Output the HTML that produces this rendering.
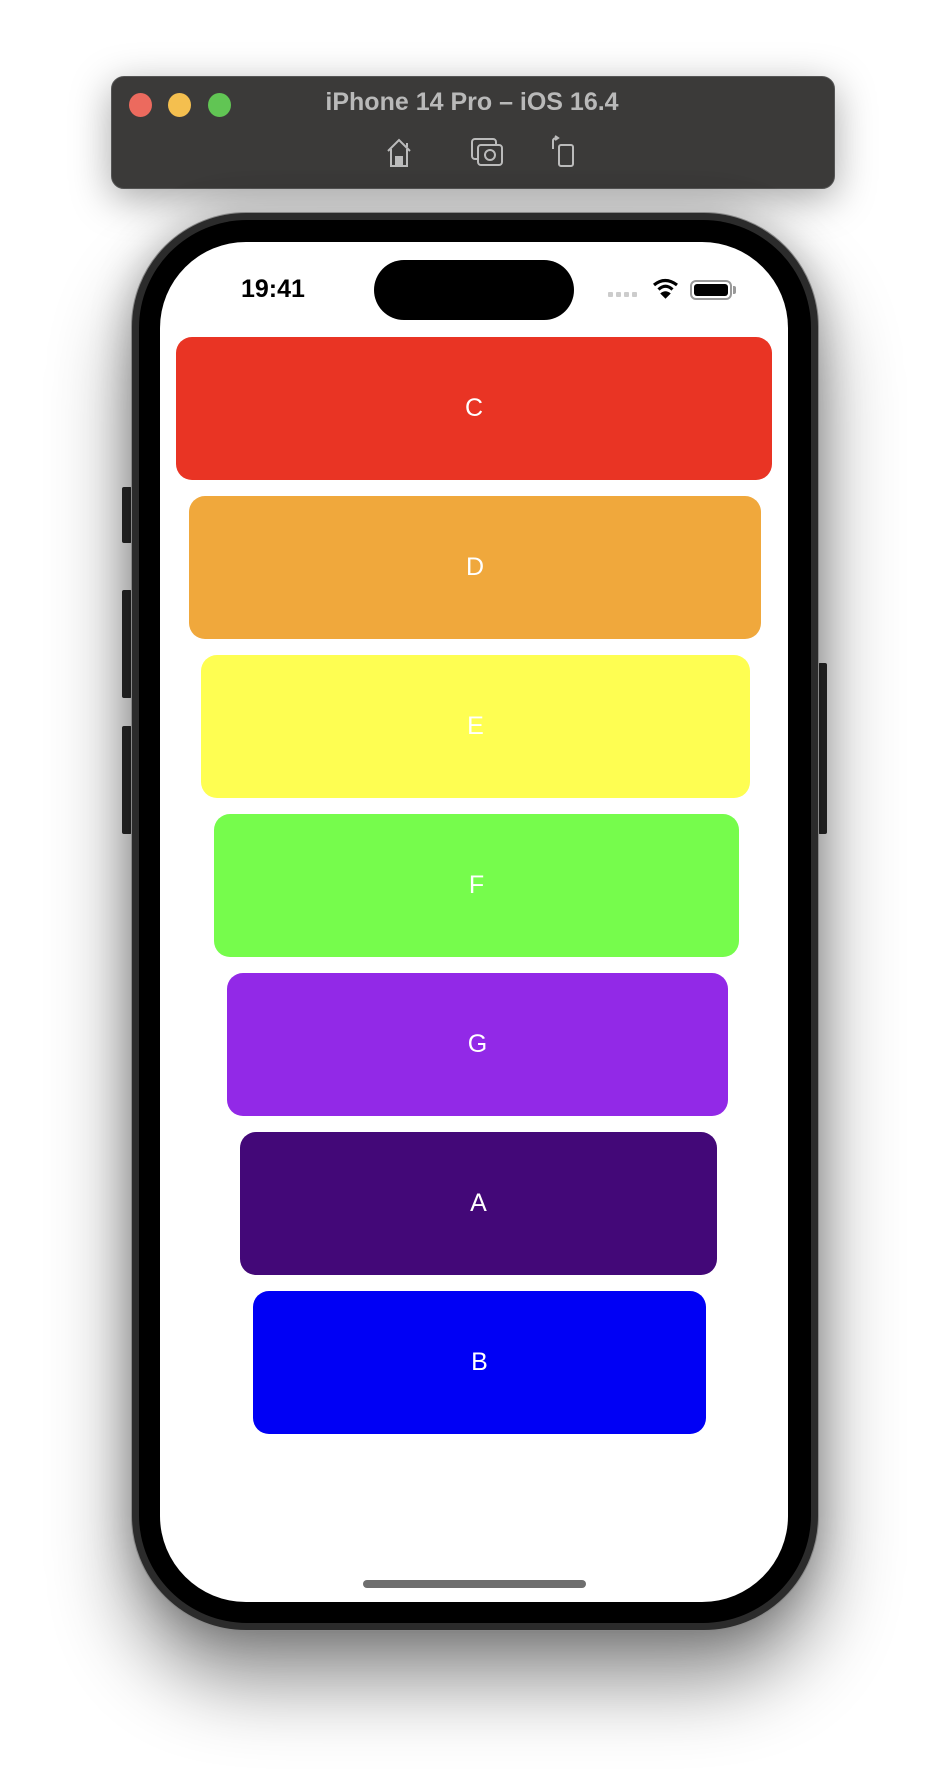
<!DOCTYPE html>
<html><head><meta charset="utf-8"><style>
*{margin:0;padding:0;box-sizing:border-box}
body{width:944px;height:1778px;background:#fff;position:relative;overflow:hidden;font-family:"Liberation Sans",sans-serif}
.abs{position:absolute}
.tb{left:111px;top:76px;width:724px;height:113px;background:#3b3a39;border-radius:13px;border:1px solid #555;box-shadow:0 10px 40px rgba(0,0,0,.35)}
.dot{width:23px;height:24px;border-radius:50%;top:93px}
.title{left:240px;width:464px;top:88px;text-align:center;color:#b9b9b9;font-weight:bold;font-size:25px}
.phone{left:131px;top:212px;width:688px;height:1419px;border-radius:115px;background:#2b2b2b;border:1px solid #888;box-shadow:0 50px 80px rgba(0,0,0,.45),0 0 40px rgba(0,0,0,.25)}
.bez{left:139px;top:220px;width:672px;height:1403px;border-radius:108px;background:#000}
.scr{left:160px;top:242px;width:628px;height:1360px;border-radius:86px;background:#fff;overflow:hidden}
.btn{background:#2b2b2b;border-radius:2px}
.box{position:absolute;height:143px;border-radius:16px;color:#fff;font-size:25px;display:flex;align-items:center;justify-content:center}
</style></head><body>
<div class="abs tb"></div>
<div class="abs dot" style="left:129px;background:#ec6a5e"></div>
<div class="abs dot" style="left:168px;background:#f4bf4f"></div>
<div class="abs dot" style="left:208px;background:#61c554"></div>
<div class="abs title">iPhone 14 Pro – iOS 16.4</div>
<svg class="abs" style="left:382px;top:137px" width="36" height="32" viewBox="0 0 36 32" fill="none" stroke="#bbb" stroke-width="2"><path d="M6 14 L17 3 L28 14 M9 12 V29 H25 V12 M25 6 V10"/><rect x="14" y="20" width="6" height="9" fill="#bbb"/></svg>
<svg class="abs" style="left:470px;top:137px" width="36" height="32" viewBox="0 0 36 32" fill="none" stroke="#bbb" stroke-width="2"><rect x="2" y="2" width="24" height="20" rx="3"/><rect x="8" y="8" width="24" height="20" rx="3" fill="#3b3a39"/><circle cx="20" cy="18" r="5"/></svg>
<svg class="abs" style="left:550px;top:135px" width="32" height="34" viewBox="0 0 32 34" fill="none" stroke="#bbb" stroke-width="2"><path d="M3 14 V6 Q3 3 7 3 M5 1 L8 3 L5 5"/><rect x="9" y="10" width="14" height="21" rx="2"/></svg>
<div class="abs btn" style="left:122px;top:487px;width:10px;height:56px"></div>
<div class="abs btn" style="left:122px;top:590px;width:10px;height:108px"></div>
<div class="abs btn" style="left:122px;top:726px;width:10px;height:108px"></div>
<div class="abs btn" style="left:818px;top:663px;width:9px;height:171px"></div>
<div class="abs phone"></div>
<div class="abs bez"></div>
<div class="abs scr">
<div class="abs" style="left:214px;top:18px;width:200px;height:60px;border-radius:30px;background:#000"></div>
<div class="abs" style="left:81px;top:33px;font-weight:bold;font-size:25px;color:#000">19:41</div>
<svg class="abs" style="left:448px;top:36px" width="32" height="22" viewBox="0 0 32 22"><g fill="#ccc"><rect x="0" y="14" width="5" height="5" rx="1"/><rect x="8" y="14" width="5" height="5" rx="1"/><rect x="16" y="14" width="5" height="5" rx="1"/><rect x="24" y="14" width="5" height="5" rx="1"/></g></svg>
<svg class="abs" style="left:492px;top:36px" width="28" height="22" viewBox="0 0 28 22" fill="none" stroke="#000" stroke-width="3.2"><path d="M2 7 Q13 -2 25 7"/><path d="M6.5 11.5 Q13.5 5 20.5 11.5"/><path d="M13.5 20 L9 15.5 Q13.5 12 18 15.5 Z" fill="#000" stroke-width="1"/></svg>
<div class="abs" style="left:530px;top:38px;width:42px;height:20px;border:2px solid #999;border-radius:6px;padding:2px"><div style="width:100%;height:100%;background:#000;border-radius:3px"></div></div>
<div class="abs" style="left:573px;top:44px;width:3px;height:8px;background:#999;border-radius:0 2px 2px 0"></div>
<div class="box" style="left:16px;top:95px;width:596px;background:#e93424">C</div>
<div class="box" style="left:29px;top:254px;width:572px;background:#f0a83c">D</div>
<div class="box" style="left:41px;top:413px;width:549px;background:#fefe52">E</div>
<div class="box" style="left:54px;top:572px;width:525px;background:#76fc4c">F</div>
<div class="box" style="left:67px;top:731px;width:501px;background:#9229e7">G</div>
<div class="box" style="left:80px;top:890px;width:477px;background:#430878">A</div>
<div class="box" style="left:93px;top:1049px;width:453px;background:#0000f5">B</div>
<div class="abs" style="left:203px;top:1338px;width:223px;height:8px;border-radius:4px;background:#6e6e6e"></div>
</div>
</body></html>
